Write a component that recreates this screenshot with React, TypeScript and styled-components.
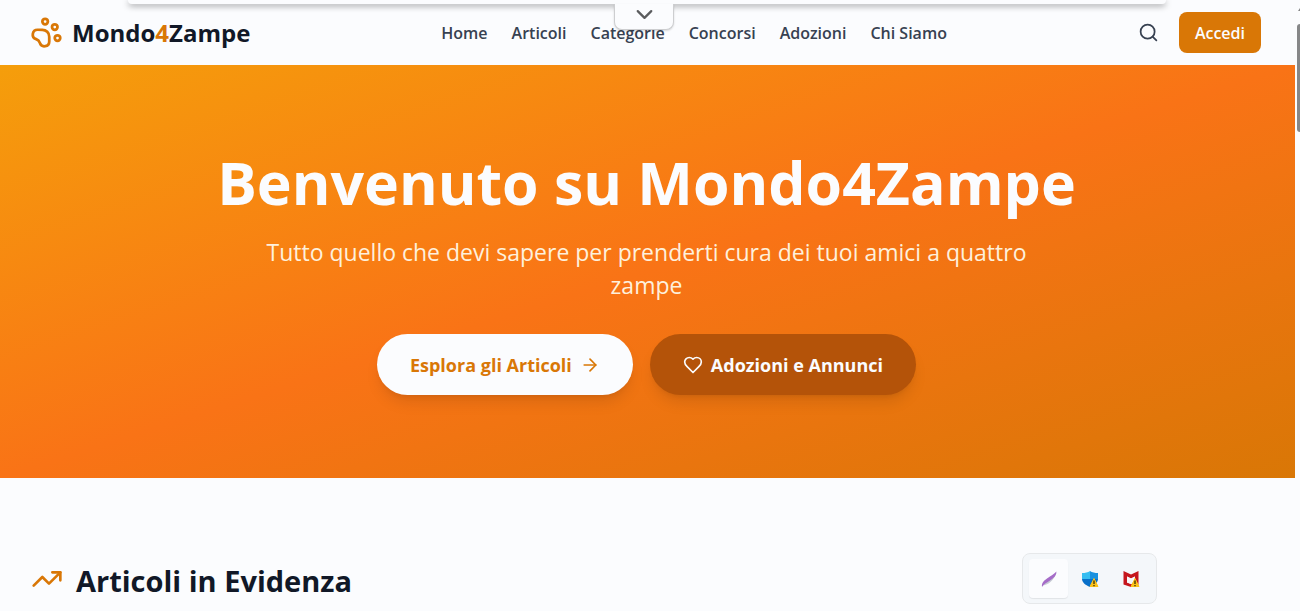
import React from "react";
import styled, { createGlobalStyle } from "styled-components";
import { ArrowRight, ChevronDown, PawPrint, Search, TrendingUp } from "lucide-react";

const GlobalStyle = createGlobalStyle`
  *, *::before, *::after { box-sizing: border-box; }
  html { overflow: hidden; }
  body {
    margin: 0;
    background: #fbfcfe;
    color: #111827;
    font-family: "Open Sans", "Noto Sans", sans-serif;
  }
`;

const Shell = styled.div`
  display: grid;
  grid-template-columns: minmax(0, 1fr) 5px;
  height: 100vh;
  overflow: hidden;
`;

const Page = styled.div`
  min-width: 0;
`;

const ScrollTrack = styled.div`
  display: flex;
  flex-direction: column;
  gap: 12px;
  padding: 8px 0 0 2px;

  svg { display: block; }
`;

const ScrollThumb = styled.div`
  height: 108px;
  border-radius: 4px 0 0 4px;
  background: #868788;
`;

const Header = styled.header`
  display: flex;
  justify-content: space-between;
  align-items: center;
  height: 65px;
  padding: 0 34px 0 30px;
`;

const Logo = styled.a`
  display: flex;
  align-items: center;
  gap: 9px;
  color: #111827;
  font-size: 24px;
  font-weight: 700;
  line-height: 32px;
  text-decoration: none;

  svg { color: #d97706; }
`;

const Accent = styled.span`
  color: #d97706;
`;

const Nav = styled.nav`
  display: flex;
  gap: 24px;
`;

const NavLink = styled.a`
  color: #374151;
  font-size: 16px;
  font-weight: 600;
  line-height: 24px;
  text-decoration: none;
`;

const Actions = styled.div`
  display: flex;
  align-items: center;
  justify-content: flex-end;
  gap: 20px;
`;

const IconButton = styled.button`
  display: flex;
  padding: 0;
  border: 0;
  background: none;
  color: #374151;
`;

const LoginButton = styled.button`
  height: 41px;
  padding: 0 16px;
  border: 0;
  border-radius: 8px;
  background: #d97706;
  color: #fbfcfe;
  font: 600 16px/24px "Open Sans", "Noto Sans", sans-serif;
`;

const Hero = styled.section`
  display: flex;
  flex-direction: column;
  align-items: center;
  padding: 84px 34px 83px 32px;
  background: linear-gradient(to bottom right, #f59e0b, #f97316 50%, #d97706);
  color: #fbfcfe;
  text-align: center;
`;

const HeroTitle = styled.h1`
  margin: 0 0 21px;
  font-size: 59px;
  font-weight: 700;
  line-height: 66px;
`;

const HeroText = styled.p`
  max-width: 792px;
  margin: 0 0 32px;
  color: #fef0dc;
  font-size: 23px;
  line-height: 33px;
`;

const HeroActions = styled.div`
  display: flex;
  gap: 17px;
`;

const PillLink = styled.a<{ $dark?: boolean }>`
  display: flex;
  align-items: center;
  gap: 8px;
  height: 61px;
  padding: 0 33px;
  border-radius: 31px;
  background: ${(p) => (p.$dark ? "#b45309" : "#fbfcfe")};
  color: ${(p) => (p.$dark ? "#fbfcfe" : "#d97706")};
  box-shadow: 0 10px 15px -3px rgba(0, 0, 0, 0.1), 0 4px 6px -4px rgba(0, 0, 0, 0.1);
  font-size: 18px;
  font-weight: 700;
  line-height: 28px;
  text-decoration: none;
`;

const Featured = styled.section`
  padding: 85px 32px 0 31px;
`;

const FeaturedTitle = styled.h2`
  display: flex;
  align-items: flex-start;
  gap: 13px;
  margin: 0;
  font-size: 29px;
  font-weight: 700;
  line-height: 36px;

  svg { color: #d97706; }
`;

const TopPanel = styled.div`
  position: fixed;
  top: 0;
  left: 128px;
  right: 134px;
  height: 4px;
  border-radius: 0 0 6px 6px;
  background: #fbfcfe;
  box-shadow: 0 2px 6px rgba(0, 0, 0, 0.4);
`;

const PanelTab = styled.button`
  position: absolute;
  top: 4px;
  left: calc(50% - 33px);
  display: flex;
  align-items: center;
  justify-content: center;
  width: 60px;
  height: 26px;
  padding: 0 0 5px;
  border: 1px solid #cdced0;
  border-top: 0;
  border-radius: 0 0 8px 8px;
  background: #fbfcfe;
  box-shadow: 0 1px 2px rgba(0, 0, 0, 0.15);
  color: #5b5c5e;
`;

const Tray = styled.div`
  position: fixed;
  right: 143px;
  bottom: 7px;
  display: flex;
  gap: 2px;
  padding: 5px 6px;
  border: 1px solid #e6e8ea;
  border-radius: 8px;
  background: #f4f7fa;
`;

const TrayButton = styled.button<{ $active?: boolean }>`
  display: flex;
  align-items: center;
  justify-content: center;
  width: 39px;
  height: 39px;
  padding: 0;
  border: 0;
  border-radius: 4px;
  background: ${(p) => (p.$active ? "#fbfcfe" : "transparent")};
  box-shadow: ${(p) => (p.$active ? "0 1px 1px rgba(0, 0, 0, 0.08)" : "none")};
`;

const links = ["Home", "Articoli", "Categorie", "Concorsi", "Adozioni", "Chi Siamo"];

const HeartIcon = () => (
  <svg width="20" height="20" viewBox="0 0 24 24" fill="none" stroke="currentColor" strokeWidth="2" strokeLinecap="round" strokeLinejoin="round" aria-hidden="true">
    <path d="M19 14c1.49-1.46 3-3.21 3-5.5A5.5 5.5 0 0 0 16.5 3c-1.76 0-3 .5-4.5 2-1.5-1.5-2.74-2-4.5-2A5.5 5.5 0 0 0 2 8.5c0 2.3 1.5 4.05 3 5.5l7 7Z" />
  </svg>
);

const FeatherIcon = () => (
  <svg width="18" height="18" viewBox="0 0 18 18" aria-hidden="true">
    <path d="M3 15.500C8 15 14 10 16.500 3L9 8Z" fill="#c6cbd3" />
    <path d="M2 17C1.500 13 3.500 11 7 8.500C10.500 6 13.500 4.500 16.500 1.500C16.500 5 14 8 10 10.500C6 13 4 14 2 17Z" fill="#a56cc8" />
  </svg>
);

const Warning = () => (
  <>
    <path d="M13 8.500L17 16.500H9Z" fill="#fcc21b" stroke="#fcc21b" strokeWidth="1" strokeLinejoin="round" />
    <path d="M13 10.500V14M13 15V16.200" stroke="#3b3000" strokeWidth="1.300" />
  </>
);

const ShieldIcon = () => (
  <svg width="18" height="18" viewBox="0 0 18 18" aria-hidden="true">
    <path d="M9 1C7 2.500 4 3 1 3V9H9Z" fill="#35bdf1" />
    <path d="M9 1C11 2.500 14 3 17 3V9H9Z" fill="#1a91df" />
    <path d="M1 9H17C17 12 14 15 9 17C4 15 1 12 1 9Z" fill="#0870c9" />
    <Warning />
  </svg>
);

const GuardIcon = () => (
  <svg width="18" height="18" viewBox="0 0 18 18" aria-hidden="true">
    <path d="M1.500 1L9 4.500L16.500 1V14.500L9 17L1.500 14.500ZM5 6.500V12.500L9 14L13 12.500V6.500L9 8.500Z" fill="#c5161d" fillRule="evenodd" />
    <path d="M5 6.500L9 8.500L13 6.500V12.500L9 14L5 12.500Z" fill="#f4f7fa" />
    <Warning />
  </svg>
);

export default function App() {
  return (
    <>
      <GlobalStyle />
      <Shell>
        <Page>
          <Header>
            <Logo href="#">
              <PawPrint size={33} aria-hidden="true" />
              <span>Mondo<Accent>4</Accent>Zampe</span>
            </Logo>
            <Nav>
              {links.map((label) => (
                <NavLink href="#" key={label}>{label}</NavLink>
              ))}
            </Nav>
            <Actions>
              <IconButton aria-label="Cerca"><Search size={21} /></IconButton>
              <LoginButton>Accedi</LoginButton>
            </Actions>
          </Header>
          <main>
            <Hero>
              <HeroTitle>Benvenuto su Mondo4Zampe</HeroTitle>
              <HeroText>
                Tutto quello che devi sapere per prenderti cura dei tuoi amici a quattro zampe
              </HeroText>
              <HeroActions>
                <PillLink href="#">
                  Esplora gli Articoli
                  <ArrowRight size={20} aria-hidden="true" />
                </PillLink>
                <PillLink href="#" $dark>
                  <HeartIcon />
                  Adozioni e Annunci
                </PillLink>
              </HeroActions>
            </Hero>
            <Featured>
              <FeaturedTitle>
                <TrendingUp size={32} aria-hidden="true" />
                Articoli in Evidenza
              </FeaturedTitle>
            </Featured>
          </main>
        </Page>
        <ScrollTrack>
          <svg width="3" height="4" viewBox="0 0 3 4" aria-hidden="true">
            <path d="M1 3L3 0V3Z" fill="#868788" />
          </svg>
          <ScrollThumb />
        </ScrollTrack>
      </Shell>
      <TopPanel>
        <PanelTab aria-label="Apri pannello"><ChevronDown size={27} strokeWidth={2} /></PanelTab>
      </TopPanel>
      <Tray>
        <TrayButton $active aria-label="Penna"><FeatherIcon /></TrayButton>
        <TrayButton aria-label="Sicurezza"><ShieldIcon /></TrayButton>
        <TrayButton aria-label="Antivirus"><GuardIcon /></TrayButton>
      </Tray>
    </>
  );
}
